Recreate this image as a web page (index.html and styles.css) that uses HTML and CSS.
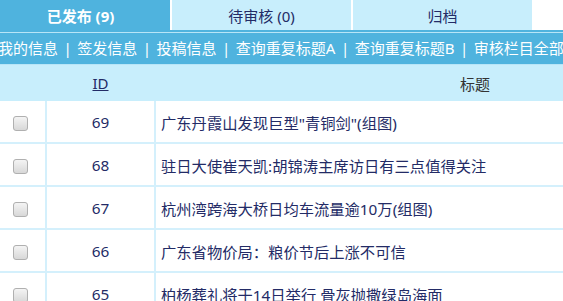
FILE: index.html
```html
<!DOCTYPE html>
<html lang="zh-CN">
  <head>
    <meta charset="UTF-8" />
    <title>信息管理</title>
    <link rel="stylesheet" href="styles.css">
  </head>
  <body>
    <div class="page">
      <!-- 状态选项卡 -->
      <div class="tabs">
        <a class="tab active" href="#">已发布 (9)</a>
        <a class="tab" href="#">待审核 (0)</a>
        <a class="tab" href="#">归档</a>
      </div>

      <div class="nav">
        <div class="nav-inner">
          我的信息<span class="sep">|</span>签发信息<span class="sep">|</span>投稿信息<span class="sep">|</span>查询重复标题A<span class="sep">|</span>查询重复标题B<span class="sep">|</span>审核栏目全部
        </div>
      </div>

      <table class="list">
        <thead>
          <tr>
            <th class="col-check"></th>
            <th class="col-id"><a href="#">ID</a></th>
            <th class="col-title">标题</th>
          </tr>
        </thead>
        <tbody>
          <tr>
            <td class="col-check"><input type="checkbox" class="chk" /></td>
            <td class="col-id">69</td>
            <td class="col-title">广东丹霞山发现巨型"青铜剑"(组图)</td>
          </tr>
          <tr>
            <td class="col-check"><input type="checkbox" class="chk" /></td>
            <td class="col-id">68</td>
            <td class="col-title">驻日大使崔天凯:胡锦涛主席访日有三点值得关注</td>
          </tr>
          <tr>
            <td class="col-check"><input type="checkbox" class="chk" /></td>
            <td class="col-id">67</td>
            <td class="col-title">杭州湾跨海大桥日均车流量逾10万(组图)</td>
          </tr>
          <tr>
            <td class="col-check"><input type="checkbox" class="chk" /></td>
            <td class="col-id">66</td>
            <td class="col-title">广东省物价局：粮价节后上涨不可信</td>
          </tr>
          <tr>
            <td class="col-check"><input type="checkbox" class="chk" /></td>
            <td class="col-id">65</td>
            <td class="col-title">柏杨葬礼将于14日举行 骨灰抛撒绿岛海面</td>
          </tr>
        </tbody>
      </table>
    </div>
  </body>
</html>
```

FILE: styles.css
```css
body {
  margin: 0;
  overflow: hidden;
  background-color: #fff;
  font-family: "Noto Sans", "Noto Sans CJK SC", sans-serif;
  font-size: 15px;
  color: #232b66;
}

.page {
  margin-left: -9px;
  width: 900px;
}

.tabs {
  display: flex;
  gap: 2px;
  height: 30px;
}

.tab {
  width: 179px;
  display: flex;
  justify-content: center;
  align-items: center;
  background-color: #c8eefc;
  color: #232b66;
  text-decoration: none;
}

.tab.active {
  background-color: #4fb3de;
  color: #fff;
  font-weight: bold;
}

.nav {
  border-top: 2px solid #4fb3de;
}

.nav-inner {
  border-top: 1px solid #b8e5f7;
  border-bottom: 1px solid #b8e5f7;
  background-color: #4fb3de;
  color: #fff;
  height: 31px;
  line-height: 31px;
  padding-left: 7px;
  white-space: nowrap;
}

.sep {
  margin: 0 5.5px;
}

.list {
  border-collapse: collapse;
  table-layout: fixed;
  width: 804px;
}

.list th {
  background-color: #c8eefc;
  height: 36px;
  padding: 0;
  font-weight: normal;
  color: #333;
}

.list th a {
  color: #232b66;
}

.list td {
  height: 41px;
  padding: 0;
  border-bottom: 2px solid #d4f0fc;
  font-size: 15.3px;
}

.list td + td {
  border-left: 2px solid #d4f0fc;
}

.col-check {
  width: 55px;
  text-align: center;
}

.col-id {
  width: 109px;
  text-align: center;
}

.col-title {
  width: 640px;
}

td.col-title {
  padding-left: 5px;
}

.chk {
  appearance: none;
  width: 15px;
  height: 15px;
  margin: 0 0 0 4px;
  vertical-align: middle;
  border: 1px solid #b0b0b0;
  border-radius: 3px;
  background: linear-gradient(#f4f4f4, #d8d8d8);
}
```
